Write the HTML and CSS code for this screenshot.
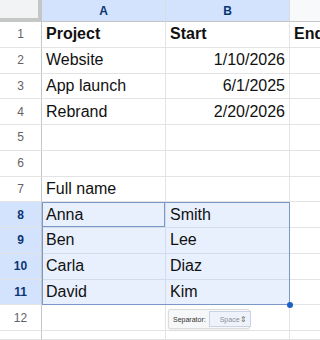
FILE: index.html
```html
<!DOCTYPE html>
<html>

<head>
  <title>Sheet</title>
  <link rel="stylesheet" href="styles.css">
</head>

<body>
  <div class="sheet">
    <div class="row head">
      <div class="corner"></div>
      <div class="col-head picked">A</div>
      <div class="col-head picked">B</div>
      <div class="col-head">C</div>
    </div>

    <div class="row">
      <div class="num">1</div>
      <div class="cell bold">Project</div>
      <div class="cell bold">Start</div>
      <div class="cell bold">End</div>
    </div>
    <div class="row">
      <div class="num">2</div>
      <div class="cell">Website</div>
      <div class="cell right">1/10/2026</div>
      <div class="cell"></div>
    </div>
    <div class="row">
      <div class="num">3</div>
      <div class="cell">App launch</div>
      <div class="cell right">6/1/2025</div>
      <div class="cell"></div>
    </div>
    <div class="row">
      <div class="num">4</div>
      <div class="cell">Rebrand</div>
      <div class="cell right">2/20/2026</div>
      <div class="cell"></div>
    </div>
    <div class="row">
      <div class="num">5</div>
      <div class="cell"></div>
      <div class="cell"></div>
      <div class="cell"></div>
    </div>
    <div class="row">
      <div class="num">6</div>
      <div class="cell"></div>
      <div class="cell"></div>
      <div class="cell"></div>
    </div>
    <div class="row">
      <div class="num">7</div>
      <div class="cell">Full name</div>
      <div class="cell"></div>
      <div class="cell"></div>
    </div>
    <div class="row">
      <div class="num picked">8</div>
      <div class="cell sel active">Anna</div>
      <div class="cell sel">Smith</div>
      <div class="cell"></div>
    </div>
    <div class="row">
      <div class="num picked">9</div>
      <div class="cell sel">Ben</div>
      <div class="cell sel">Lee</div>
      <div class="cell"></div>
    </div>
    <div class="row">
      <div class="num picked">10</div>
      <div class="cell sel">Carla</div>
      <div class="cell sel">Diaz</div>
      <div class="cell"></div>
    </div>
    <div class="row">
      <div class="num picked">11</div>
      <div class="cell sel">David</div>
      <div class="cell sel">Kim</div>
      <div class="cell"></div>
    </div>
    <div class="row">
      <div class="num">12</div>
      <div class="cell"></div>
      <div class="cell"></div>
      <div class="cell"></div>
    </div>
    <div class="row short">
      <div class="num"></div>
      <div class="cell"></div>
      <div class="cell"></div>
      <div class="cell"></div>
    </div>

    <!-- selection outline + fill handle -->
    <div class="range">
      <span class="handle"></span>
    </div>

    <div class="split-box">
      <span class="split-label">Separator:</span>
      <span class="split-select">Space <span class="arrows">&#8661;</span></span>
    </div>
  </div>
</body>

</html>
```

FILE: styles.css
```css
body {
  margin: 0;
  font-family: "Liberation Sans", Arial, sans-serif;
  background-color: #fff;
}

.sheet {
  position: relative;
  width: 320px;
  height: 340px;
  overflow: hidden;
}

.row {
  display: grid;
  grid-template-columns: 42px 124px 124px 30px;
  height: 25.75px;
}

.row.head {
  height: 22px;
}

.row.short {
  height: 9px;
}

.corner {
  background-color: #f1f3f4;
  border-right: 4px solid #c4c7c5;
  border-bottom: 4px solid #c4c7c5;
  box-sizing: border-box;
}

.col-head {
  display: flex;
  align-items: center;
  justify-content: center;
  font-size: 12px;
  color: #444;
  background-color: #f8f9fa;
  border-right: 1px solid #dadce0;
  border-bottom: 1px solid #c4c7c5;
  box-sizing: border-box;
  overflow: hidden;
}

.col-head:last-child {
  color: transparent;
  border-right: none;
}

.col-head.picked {
  background-color: #d3e3fd;
  color: #0b3572;
  font-weight: bold;
}

.num {
  display: flex;
  align-items: center;
  justify-content: center;
  font-size: 12px;
  color: #5f6368;
  background-color: #fff;
  border-right: 1px solid #c4c7c5;
  border-bottom: 1px solid #e3e3e3;
  box-sizing: border-box;
}

.num.picked {
  background-color: #d3e3fd;
  color: #0b3572;
  font-weight: bold;
}

.cell {
  display: flex;
  align-items: center;
  padding: 0 4px;
  font-size: 16px;
  color: #111;
  white-space: nowrap;
  overflow: hidden;
  border-right: 1px solid #e3e3e3;
  border-bottom: 1px solid #e3e3e3;
  box-sizing: border-box;
}

.row .cell:last-child {
  border-right: none;
  padding-right: 0;
}

.cell.bold {
  font-weight: bold;
}

.cell.right {
  justify-content: flex-end;
}

.cell.sel {
  background-color: #e8f0fe;
  border-color: #d3dcec;
}

.cell.active {
  box-shadow: inset 0 0 0 1px #7b97c6;
}

.range {
  position: absolute;
  left: 42px;
  top: 202px;
  width: 248px;
  height: 103px;
  border: 1px solid #7b97c6;
  box-sizing: border-box;
  pointer-events: none;
}

.handle {
  position: absolute;
  right: -4px;
  bottom: -4px;
  width: 6px;
  height: 6px;
  border-radius: 50%;
  background-color: #1a5fc8;
}

.split-box {
  position: absolute;
  left: 168px;
  top: 309px;
  width: 82px;
  height: 20px;
  display: flex;
  align-items: center;
  gap: 3px;
  padding: 0 2px 0 4px;
  background-color: #f6f7f8;
  border: 1px solid #dcdcdc;
  border-radius: 2px;
  box-sizing: border-box;
  box-shadow: 0 1px 2px rgba(0, 0, 0, 0.08);
}

.split-label {
  font-size: 7px;
  color: #333;
}

.split-select {
  flex: 1;
  height: 16px;
  display: flex;
  align-items: center;
  justify-content: space-between;
  padding: 0 3px 0 10px;
  font-size: 7px;
  color: #8a8f96;
  background-color: #eef3fb;
  border: 1px solid #c9d3e1;
  box-sizing: border-box;
}

.arrows {
  font-size: 8px;
  color: #666;
}
```
